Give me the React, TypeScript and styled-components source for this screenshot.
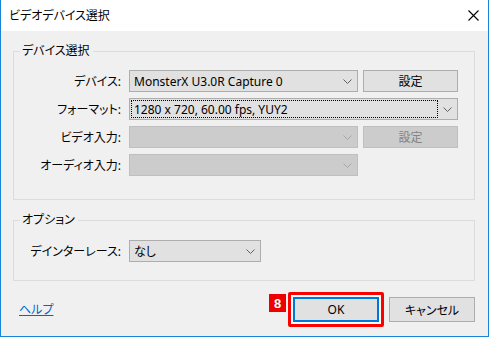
import React from 'react';
import styled, { createGlobalStyle } from 'styled-components';

const GlobalStyle = createGlobalStyle`
  html, body {
    margin: 0;
    padding: 0;
    background: #ffffff;
  }
  body {
    font-family: "Noto Sans", "Noto Sans CJK JP", sans-serif;
    font-size: 12px;
    font-feature-settings: "palt";
    color: #000;
  }
`;

const Window = styled.div`
  width: 489px;
  height: 337px;
  box-sizing: border-box;
  border-left: 1px solid #1883d7;
  border-right: 1px solid #1883d7;
  border-bottom: 1px solid #1883d7;
  display: flex;
  flex-direction: column;
  overflow: hidden;
`;

const TitleBar = styled.div`
  height: 31px;
  flex: none;
  background: #fff;
  display: flex;
  align-items: center;
  justify-content: space-between;
  padding: 0 9px 0 8px;
  line-height: 16px;
`;

const Body = styled.div`
  flex: 1;
  background: #f0f0f0;
  display: flex;
  flex-direction: column;
  padding: 12px 13px 0 12px;
`;

const Group = styled.fieldset<{ $pt: number; $pb: number; $mt?: number }>`
  margin: ${p => p.$mt ?? 0}px 0 0 0;
  padding: ${p => p.$pt}px 0 ${p => p.$pb}px 0;
  border: 1px solid #dcdcdc;
  min-width: 0;
`;

const Legend = styled.legend`
  margin-left: 6px;
  padding: 0 3px 0 2px;
  line-height: 16px;
`;

const Grid = styled.div<{ $cols: string }>`
  display: grid;
  grid-template-columns: ${p => p.$cols};
  grid-auto-rows: 22px;
  column-gap: 5px;
  row-gap: 6px;
`;

const Label = styled.div`
  display: flex;
  align-items: center;
  justify-content: flex-end;
  padding-right: 3px;
  white-space: nowrap;
`;

const Combo = styled.div<{ $disabled?: boolean; $span?: number }>`
  grid-column: span ${p => p.$span ?? 1};
  box-sizing: border-box;
  height: 22px;
  display: flex;
  align-items: center;
  border: 1px solid ${p => (p.$disabled ? '#bfbfbf' : '#adadad')};
  background: ${p => (p.$disabled ? '#cccccc' : '#e1e1e1')};
  padding: 0 0 0 1px;
`;

const ComboText = styled.div<{ $focused?: boolean }>`
  flex: 1;
  height: 18px;
  box-sizing: border-box;
  display: flex;
  align-items: center;
  padding-left: 2px;
  border: 1px dotted ${p => (p.$focused ? '#000' : 'transparent')};
  white-space: nowrap;
  overflow: hidden;
`;

const Arrow = styled.div`
  width: 19px;
  flex: none;
  display: flex;
  align-items: center;
  justify-content: center;
`;

const Button = styled.button<{ $disabled?: boolean; $default?: boolean }>`
  box-sizing: border-box;
  height: 22px;
  margin: 0;
  padding: 0;
  font: inherit;
  font-feature-settings: "palt";
  border: ${p => (p.$default ? '2px solid #0078d7' : `1px solid ${p.$disabled ? '#bfbfbf' : '#adadad'}`)};
  background: ${p => (p.$disabled ? '#cccccc' : '#e1e1e1')};
  color: ${p => (p.$disabled ? '#838383' : '#000')};
`;

const Footer = styled.div`
  display: flex;
  align-items: center;
  justify-content: space-between;
  margin-top: 16px;
  padding-left: 6px;
`;

const HelpLink = styled.a`
  color: #0066cc;
  text-decoration: underline;
  line-height: 16px;
`;

const ButtonRow = styled.div`
  display: flex;
  gap: 10px;
`;

const DialogButton = styled(Button)`
  width: 86px;
  height: 25px;
`;

const Marked = styled.div`
  position: relative;
  display: flex;
`;

const Highlight = styled.div`
  position: absolute;
  left: -5px;
  top: -5px;
  right: -5px;
  bottom: -5px;
  border: 3px solid #ff0000;
  border-radius: 2px;
  box-shadow: inset 0 0 0 2px #fff;
  pointer-events: none;
`;

const Badge = styled.div`
  position: absolute;
  left: -24px;
  top: -3px;
  width: 17px;
  height: 18px;
  background: #ee0000;
  color: #fff;
  font-family: "Liberation Sans", sans-serif;
  font-weight: bold;
  font-size: 13px;
  display: flex;
  align-items: center;
  justify-content: center;
`;

const Chevron: React.FC<{ color: string }> = ({ color }) => (
  <svg width="9" height="5" viewBox="0 0 9 5">
    <polyline points="0.5,0.5 4.5,4.5 8.5,0.5" fill="none" stroke={color} strokeWidth="1" />
  </svg>
);

const Close = () => (
  <svg width="11" height="11" viewBox="0 0 11 11">
    <path d="M0.5 0.5 L10.5 10.5 M10.5 0.5 L0.5 10.5" stroke="#000" strokeWidth="1.1" />
  </svg>
);

const Select: React.FC<{ value?: string; disabled?: boolean; focused?: boolean; span?: number }> = ({
  value,
  disabled,
  focused,
  span,
}) => (
  <Combo $disabled={disabled} $span={span}>
    <ComboText $focused={focused}>{value}</ComboText>
    <Arrow>
      <Chevron color={disabled ? '#a6a6a6' : '#606060'} />
    </Arrow>
  </Combo>
);

export default function App() {
  return (
    <>
      <GlobalStyle />
      <Window>
        <TitleBar>
          <span>ビデオデバイス選択</span>
          <Close />
        </TitleBar>
        <Body>
          <Group $pt={11} $pb={23}>
            <Legend>デバイス選択</Legend>
            <Grid $cols="110px 229px 95px">
              <Label>デバイス:</Label>
              <Select value="MonsterX U3.0R Capture 0" />
              <Button>設定</Button>

              <Label>フォーマット:</Label>
              <Select value="1280 x 720, 60.00 fps, YUY2" focused span={2} />

              <Label>ビデオ入力:</Label>
              <Select disabled />
              <Button $disabled>設定</Button>

              <Label>オーディオ入力:</Label>
              <Select disabled />
            </Grid>
          </Group>
          <Group $pt={12} $pb={18} $mt={12}>
            <Legend>オプション</Legend>
            <Grid $cols="110px 132px">
              <Label>デインターレース:</Label>
              <Select value="なし" />
            </Grid>
          </Group>
          <Footer>
            <HelpLink>ヘルプ</HelpLink>
            <ButtonRow>
              <Marked>
                <DialogButton $default>OK</DialogButton>
                <Highlight />
                <Badge>8</Badge>
              </Marked>
              <DialogButton>キャンセル</DialogButton>
            </ButtonRow>
          </Footer>
        </Body>
      </Window>
    </>
  );
}
